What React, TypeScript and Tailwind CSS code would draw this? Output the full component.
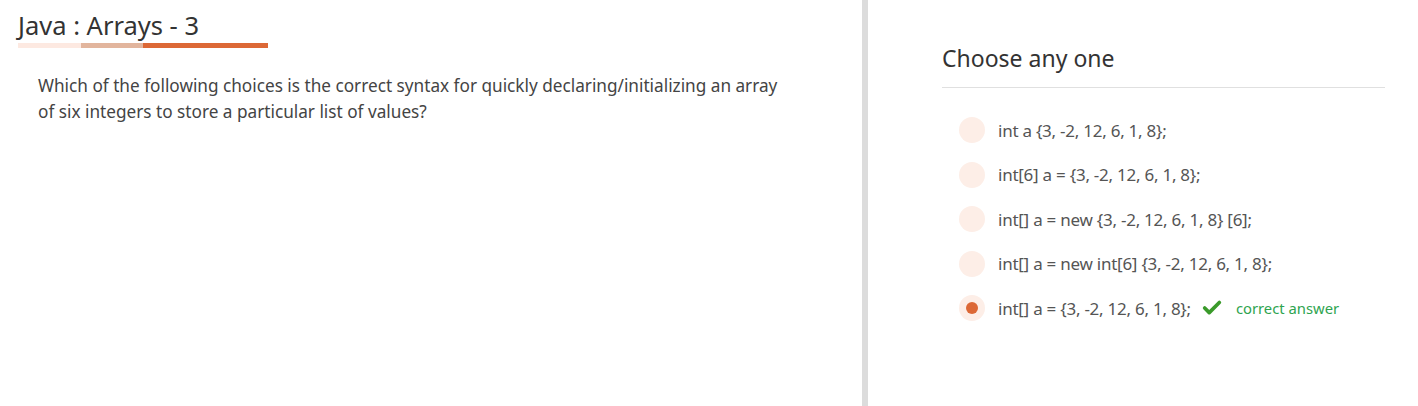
import { Check } from 'lucide-react';

const options = [
  'int a {3, -2, 12, 6, 1, 8};',
  'int[6] a = {3, -2, 12, 6, 1, 8};',
  'int[] a = new {3, -2, 12, 6, 1, 8} [6];',
  'int[] a = new int[6] {3, -2, 12, 6, 1, 8};',
  'int[] a = {3, -2, 12, 6, 1, 8};',
];

const correctIndex = 4;

export default function App() {
  return (
    <div className="flex h-[406px] w-[1418px] bg-white font-['Noto_Sans',sans-serif] text-[#333]">
      {/* Left: question */}
      <div className="w-[862px] pl-[18px] pt-[8px]">
        <h1 className="text-[25.5px] leading-[34px] text-[#333]">Java : Arrays - 3</h1>
        <div className="mt-[1px] flex h-[5px] w-[250px]">
          <div className="w-[63px] bg-[#fde9e1]" />
          <div className="w-[62px] bg-[#e2b59d]" />
          <div className="flex-1 bg-[#dc6836]" />
        </div>
        <p className="mt-[25px] w-[780px] pl-[20px] text-[17.2px] leading-[26px] text-[#444]">
          Which of the following choices is the correct syntax for quickly declaring/initializing an array of six integers to store a particular list of values?
        </p>
      </div>

      {/* Divider */}
      <div className="w-[6px] bg-[#dcdcdc]" />

      {/* Right: choices */}
      <div className="flex-1 pl-[74px] pr-[33px] pt-[42px]">
        <h2 className="border-b border-[#e0e0e0] pb-[13px] text-[23px] leading-[32px] text-[#333]">Choose any one</h2>
        <ul className="mt-[20px] flex flex-col pl-[17px]">
          {options.map((opt, i) => (
            <li key={i} className="flex h-[44.5px] items-center">
              <span className="flex h-[26px] w-[26px] items-center justify-center rounded-full bg-[#fdeee7]">
                {i === correctIndex && <span className="h-[12px] w-[12px] rounded-full bg-[#dc6836]" />}
              </span>
              <span className="ml-[13px] text-[17px] tracking-[-0.25px] text-[#555]">{opt}</span>
              {i === correctIndex && (
                <span className="ml-[10px] flex items-center gap-[13px] text-[14.8px] text-[#2ea44f]">
                  <Check className="h-[22px] w-[22px] text-[#3a9a2a]" strokeWidth={4} />
                  correct answer
                </span>
              )}
            </li>
          ))}
        </ul>
      </div>
    </div>
  );
}
